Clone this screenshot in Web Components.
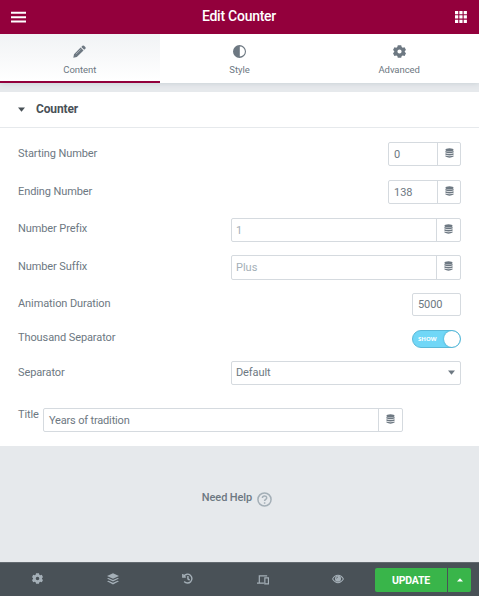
<!DOCTYPE html>
<html lang="en"><head><meta charset="utf-8"><title>Edit Counter</title>
<style>html,body{margin:0;height:100%;overflow:hidden;background:#e6e9ec}</style></head><body>
<editor-panel></editor-panel>
<script>
const icons={
pencil:'<path d="M.3 12.700 1 9.200 7.600 2.600l2.900 2.900L3.800 12zM8.300 1.900l1.100-1.100q.8-.8 1.600 0l1.300 1.300q.8.800 0 1.600l-1.100 1.100z"/><path d="M3 9.100 7.700 4.400" stroke="#fff" stroke-width=".4"/>',
contrast:'<path fill-rule="evenodd" d="M6.500 0a6.500 6.500 0 1 1 0 13 6.500 6.500 0 0 1 0-13zM6.800 1.400v10.200a5.100 5.100 0 0 0 0-10.200z"/>',
gear:'<path fill-rule="evenodd" d="M4.800.2h3.400l.5 1.900 1 .6 1.900-.5 1.400 2.700-1.200 1.100v1l1.200 1.200-1.400 2.700-1.900-.5-1 .6-.5 1.800H4.800L4.300 11l-1-.6-1.900.5L0 8.200l1.200-1.200v-1L0 4.900l1.400-2.700 1.900.5 1-.6zM6.500 4.400a2.100 2.100 0 1 0 0 4.200 2.100 2.100 0 0 0 0-4.200z"/>',
stack:'<ellipse cx="6.5" cy="2.400" rx="5.900" ry="2.200"/><path d="M.6 4q5.900 2 11.800 0v1.900q-5.900 2-11.800 0zM.6 6.900q5.900 2 11.800 0v1.900q-5.900 2-11.800 0zM.6 9.800q5.900 2 11.800 0v1.400q-5.900 2.800-11.800 0z"/>',
layers:'<path d="M6.500.3 13 3.300 6.500 6.300 0 3.300zM0 6l1.600-.7 4.900 2.200 4.900-2.200L13 6 6.500 9.200zM0 9l1.600-.7 4.900 2.200 4.900-2.200L13 9l-6.500 3.400z"/>',
history:'<path d="M2.300 3.500A5.200 5.200 0 1 1 2.600 10M1 1.200v3.500h3.500M7 3.600v3.300l2 1.500" fill="none" stroke="currentColor" stroke-width="1.700"/>',
devices:'<path d="M11 3.200H2.500v7M0 11h7.500M8.500 5.200h3.900v6.500H8.500z" fill="none" stroke="currentColor" stroke-width="1.300"/>',
eye:'<path fill-rule="evenodd" d="M0 6.500Q2.600 2 6.500 2T13 6.500Q10.400 11 6.500 11T0 6.500zm1.200 0Q3.300 10 6.500 10t5.300-3.500Q9.700 3 6.500 3T1.200 6.500z"/><circle cx="6.500" cy="6.200" r="3.300"/><path d="M4.900 6q0-1.600 1.600-1.600" fill="none" stroke="#495157" stroke-width=".7"/>',
help:'<circle cx="6.500" cy="6.500" r="5.700" fill="none" stroke="currentColor" stroke-width="1.300"/><path d="M4.700 5.200c0-2.300 3.700-2.300 3.700-.1 0 1.300-1.800 1.300-1.800 2.700M6.600 8.900v1.200" fill="none" stroke="currentColor" stroke-width="1.300"/>',
down:'<path d="M0 3h13L6.500 10.500z"/>',up:'<path d="M0 10h13L6.500 2.500z"/>',
menu:'<path d="M0 .8h13v2H0zM0 5.200h13v2H0zM0 9.600h13v2H0z"/>',
apps:'<path d="M0 0h3.500v3.500H0zM4.700 0h3.500v3.500H4.700zM9.400 0h3.500v3.500H9.400zM0 4.700h3.500v3.500H0zM4.700 4.700h3.500v3.500H4.700zM9.400 4.700h3.500v3.500H9.400zM0 9.400h3.500v3.500H0zM4.700 9.400h3.500v3.500H4.700zM9.400 9.400h3.500v3.500H9.400z"/>'
};
function define(name,render){
 customElements.define(name,class extends HTMLElement{
  connectedCallback(){if(!this.shadowRoot)this.attachShadow({mode:'open'}).innerHTML=render(this)}
 });
}
define('ui-icon',e=>`<style>:host{display:block;flex:none;width:var(--w,12px);height:var(--h,var(--w,12px))}svg{display:block;width:100%;height:100%}</style><svg viewBox="0 0 13 13" preserveAspectRatio="none" fill="currentColor">${icons[e.getAttribute('name')]}</svg>`);
define('panel-header',()=>`<style>:host{display:flex;box-sizing:border-box;height:34px;padding:0 12px 0 11px;align-items:center;justify-content:space-between;background:#93003c;color:#fff;font-size:14px;font-weight:500}span{letter-spacing:-.25px;padding:0 3px 3px 0}</style><ui-icon name="menu" style="--w:15px;--h:13px"></ui-icon><span><slot></slot></span><ui-icon name="apps"></ui-icon>`);
define('panel-tab',e=>`<style>:host{display:flex;flex:1;flex-direction:column;align-items:center;box-sizing:border-box;height:49px;padding-top:11px;gap:5px;background:#fff;color:#6d7882;font-size:9.500px;line-height:14px;letter-spacing:-.05px}:host([active]){background:linear-gradient(#f1f3f5,#fff);border-bottom:2px solid #93003c}</style><ui-icon name="${e.getAttribute('icon')}" style="--w:13px"></ui-icon><span><slot></slot></span>`);
define('section-title',()=>`<style>:host{display:flex;box-sizing:border-box;height:36px;align-items:center;padding:0 18px 1px;gap:11px;background:#fff;border-bottom:1px solid #e6e9ec;color:#495157;font-weight:700;font-size:12px;letter-spacing:-.15px}</style><ui-icon name="down" style="--w:7px"></ui-icon><span><slot></slot></span>`);
define('control-row',()=>`<style>:host{display:flex;align-items:flex-start;justify-content:space-between;height:var(--rh,38px)}label{line-height:14px;padding-top:var(--lt,5px);white-space:nowrap}</style><label><slot name="label"></slot></label><slot></slot>`);
define('text-field',e=>`<style>:host{display:flex;box-sizing:border-box;width:var(--fw,73px);height:var(--fh,24px);border:1px solid #d5dadf;border-radius:2px;color:#6d7882;letter-spacing:var(--fs,0)}.v{flex:1;padding-left:5px;line-height:calc(var(--fh,24px) - 1px)}:host([placeholder]) .v{color:#a4afb7;padding-left:4px}.b{width:var(--bw,23px);border-left:1px solid #d5dadf;display:flex;justify-content:center;padding-top:5px;box-sizing:border-box}</style><span class="v"><slot></slot></span>${e.hasAttribute('dynamic')?'<span class="b"><ui-icon name="stack" style="--w:9px;--h:10px"></ui-icon></span>':''}`);
define('select-field',()=>`<style>:host{display:flex;box-sizing:border-box;width:230px;height:24px;border:1px solid #d5dadf;border-radius:2px;padding:0 5px 1px 4px;align-items:center;justify-content:space-between}</style><span><slot></slot></span><ui-icon name="down" style="--w:7px"></ui-icon>`);
define('toggle-switch',()=>`<style>:host{display:flex;box-sizing:border-box;width:49px;height:18px;border:1px solid #5bb9d8;border-radius:9px;background:#71d7f7;color:#fff;align-items:center;padding-left:5px;justify-content:space-between;font:700 6px "Open Sans",sans-serif;letter-spacing:0;overflow:hidden}i{width:16px;height:16px;border-radius:50%;background:#fff;box-shadow:0 0 2px #3595b4}</style><span><slot></slot></span><i></i>`);
define('panel-footer',()=>`<style>:host{display:flex;box-sizing:border-box;height:34px;background:#495157;border-top:1px solid #636a70;color:#a4afb7}nav{display:grid;grid-template-columns:repeat(5,75px);width:375px;place-items:center;height:31px}.u{display:flex;gap:1px;padding-top:5px;color:#fff;font:700 10.500px Roboto,sans-serif;letter-spacing:-.2px}.u>*{background:#39b54a;height:24px;display:flex;align-items:center;justify-content:center}.a{width:72px;border-radius:2px 0 0 2px}.c{width:23px;border-radius:0 2px 2px 0}</style><nav><ui-icon name="gear" style="--w:11px"></ui-icon><ui-icon name="layers"></ui-icon><ui-icon name="history" style="--w:11px"></ui-icon><ui-icon name="devices"></ui-icon><ui-icon name="eye"></ui-icon></nav><div class="u"><span class="a"><slot></slot></span><span class="c"><ui-icon name="up" style="--w:6px"></ui-icon></span></div>`);
define('editor-panel',()=>`<style>
:host{display:flex;flex-direction:column;width:479px;height:596px;font:400 11px/14px Roboto,sans-serif;letter-spacing:-.1px;color:#6d7882;background:#e6e9ec}
.tabs{display:flex;height:49px;margin-bottom:9px;box-shadow:0 1px 5px #ccd3d8}
panel-header{position:relative}
.controls{background:#fff;padding:14px 18px 0;height:304px}
.help{flex:1;display:flex;justify-content:center;padding:45px 5px 0 0;font-weight:500;gap:5px}.help ui-icon{margin-top:1px;color:#a4afb7}
</style>
<panel-header>Edit Counter</panel-header>
<div class="tabs"><panel-tab active icon="pencil">Content</panel-tab><panel-tab icon="contrast">Style</panel-tab><panel-tab icon="gear">Advanced</panel-tab></div>
<section-title>Counter</section-title>
<div class="controls">
<control-row><span slot="label">Starting Number</span><text-field dynamic>0</text-field></control-row>
<control-row><span slot="label">Ending Number</span><text-field dynamic>138</text-field></control-row>
<control-row style="--rh:37px;--lt:4px"><span slot="label">Number Prefix</span><text-field dynamic placeholder style="--fw:230px;--bw:24px">1</text-field></control-row>
<control-row><span slot="label">Number Suffix</span><text-field dynamic placeholder style="--fw:230px;--bw:24px;--fh:25px">Plus</text-field></control-row>
<control-row style="--rh:37px;--lt:4px"><span slot="label">Animation Duration</span><text-field style="--fw:49px;--fh:23px;--fs:-.1px">5000</text-field></control-row>
<control-row style="--rh:31px;--lt:1px"><span slot="label">Thousand Separator</span><toggle-switch>SHOW</toggle-switch></control-row>
<control-row style="--rh:47px"><span slot="label">Separator</span><select-field>Default</select-field></control-row>
<control-row style="--lt:0px"><span slot="label">Title</span><text-field dynamic style="--fw:360px;--bw:24px;--fs:-.17px;margin-right:58px">Years of tradition</text-field></control-row>
</div>
<div class="help"><span>Need Help</span><ui-icon name="help" style="--w:15px"></ui-icon></div>
<panel-footer>UPDATE</panel-footer>`);
</script></body></html>
